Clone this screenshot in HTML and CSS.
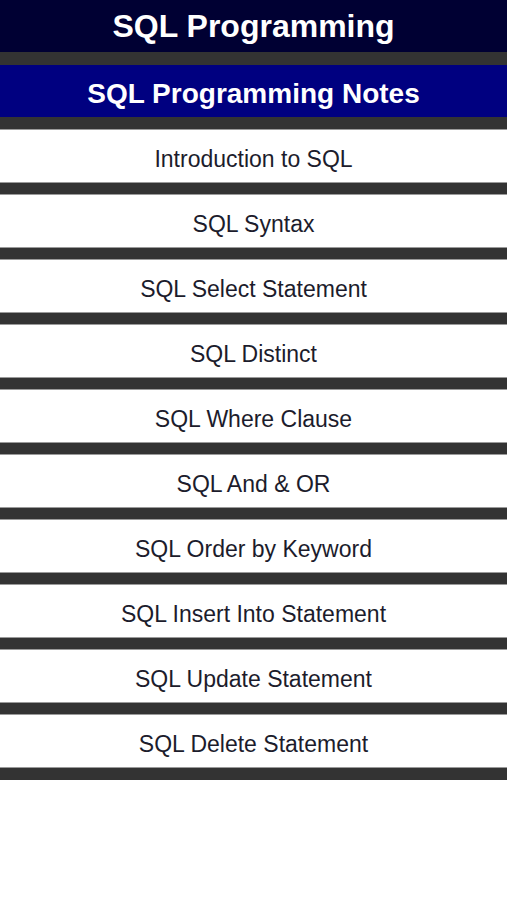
FILE: index.html
```html
<!DOCTYPE html>
<html>
<head>
<meta charset="utf-8">
<title>SQL Programming</title>
<link rel="stylesheet" href="styles.css">
</head>
<body>
<div class="page">
  <header class="title-bar">SQL Programming</header>
  <div class="section-bar">SQL Programming Notes</div>
  <nav class="menu">
    <div class="item">Introduction to SQL</div>
    <div class="item">SQL Syntax</div>
    <div class="item">SQL Select Statement</div>
    <div class="item">SQL Distinct</div>
    <div class="item">SQL Where Clause</div>
    <div class="item">SQL And &amp; OR</div>
    <div class="item">SQL Order by Keyword</div>
    <div class="item">SQL Insert Into Statement</div>
    <div class="item">SQL Update Statement</div>
    <div class="item">SQL Delete Statement</div>
  </nav>
</div>
</body>
</html>
```
FILE: styles.css
```css
html, body {
  margin: 0;
  padding: 0;
  background: #ffffff;
  font-family: "Liberation Sans", Arial, sans-serif;
}

* {
  box-sizing: border-box;
}

.page {
  display: flex;
  flex-direction: column;
  gap: 13px;
  background: #333333;
  padding-bottom: 13px;
}

.title-bar {
  height: 52px;
  background: #000033;
  color: #ffffff;
  font-weight: bold;
  font-size: 32px;
  display: flex;
  align-items: center;
  justify-content: center;
}

.section-bar {
  height: 52px;
  padding-top: 5px;
  background: #000080;
  color: #ffffff;
  font-weight: bold;
  font-size: 28px;
  display: flex;
  align-items: center;
  justify-content: center;
}

.menu {
  display: flex;
  flex-direction: column;
  gap: 13px;
}

.item {
  height: 52px;
  padding-top: 6px;
  background: #ffffff;
  color: #1c1c2c;
  font-size: 23px;
  display: flex;
  align-items: center;
  justify-content: center;
  box-shadow: 0 0 0 1px #9a9a9a;
}
```
